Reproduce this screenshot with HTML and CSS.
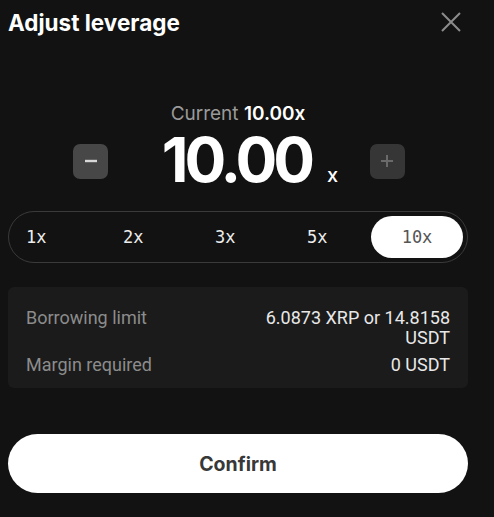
FILE: index.html
```html
<!DOCTYPE html>
<html lang="en">
<head>
    <meta charset="UTF-8">
    <meta name="viewport" content="width=device-width, initial-scale=1.0">
    <title>Adjust leverage</title>
    <link rel="stylesheet" href="styles.css">
</head>
<body>
    <div class="modal">
        <header class="modal-head">
            <h1>Adjust leverage</h1>
            <button class="close" aria-label="Close">
                <svg width="20" height="20" viewBox="0 0 20 20">
                    <path d="M1 1 L19 19 M19 1 L1 19" stroke="#8c8c8c" stroke-width="2" fill="none"/>
                </svg>
            </button>
        </header>

        <div class="current">Current <b>10.00x</b></div>

        <div class="stepper">
            <button class="step step-minus" aria-label="Decrease">
                <svg width="14" height="14" viewBox="0 0 14 14"><path d="M1 7 H13" stroke="#d8d8d8" stroke-width="2.4"/></svg>
            </button>
            <div class="value">10.00<span>x</span></div>
            <button class="step step-plus" aria-label="Increase">
                <svg width="14" height="14" viewBox="0 0 14 14"><path d="M1 7 H13 M7 1 V13" stroke="#6a6a6a" stroke-width="2"/></svg>
            </button>
        </div>

        <div class="presets">
            <button>1x</button>
            <button>2x</button>
            <button>3x</button>
            <button>5x</button>
            <button class="active">10x</button>
        </div>

        <div class="info">
            <div class="info-row">
                <span class="label">Borrowing limit</span>
                <span class="val">6.0873 XRP or 14.8158<br>USDT</span>
            </div>
            <div class="info-row">
                <span class="label">Margin required</span>
                <span class="val">0 USDT</span>
            </div>
        </div>

        <button class="confirm">Confirm</button>
    </div>
</body>
</html>
```

FILE: styles.css
```css
body {
    margin: 0;
    background-color: #121212;
    color: #fff;
    font-family: 'Inter', 'Liberation Sans', sans-serif;
}

button {
    font-family: inherit;
    cursor: pointer;
}

.modal {
    width: 460px;
    padding: 0 8px;
}

.modal-head {
    display: flex;
    justify-content: space-between;
    align-items: center;
    height: 44px;
}

.modal-head h1 {
    margin: 0;
    font-size: 22.5px;
    font-weight: 700;
}

.close {
    background: none;
    border: 0;
    padding: 0;
    margin-right: 7px;
    display: flex;
}

.current {
    text-align: center;
    margin-top: 58px;
    font-size: 19px;
    color: #9a9a9a;
    line-height: 24px;
}

.current b {
    color: #fff;
    font-weight: 600;
}

.stepper {
    display: flex;
    align-items: center;
    justify-content: space-between;
    padding: 0 63px 0 65px;
    margin-top: 7px;
    height: 56px;
}

.step {
    width: 35px;
    height: 35px;
    border: 0;
    border-radius: 7px;
    display: flex;
    align-items: center;
    justify-content: center;
    padding: 0;
}

.step-minus {
    background-color: #474747;
}

.step-plus {
    background-color: #363636;
}

.value {
    font-size: 62px;
    font-weight: 700;
    letter-spacing: -4px;
    line-height: 50px;
    margin: 12px 0 0 22px;
}

.value span {
    font-size: 20px;
    font-weight: 500;
    letter-spacing: 0;
    margin-left: 16px;
}

.presets {
    display: grid;
    grid-template-columns: 97px 92px 92px 77px 92px;
    margin-top: 22px;
    border: 1px solid #3a3a3a;
    border-radius: 27px;
    padding: 4px;
}

.presets button {
    height: 42px;
    background: none;
    border: 0;
    border-radius: 21px;
    color: #ececec;
    font-size: 17px;
    font-family: 'DejaVu Sans Mono', monospace;
    text-align: left;
    padding: 0 0 0 13px;
}

.presets button.active {
    background-color: #fff;
    color: #555;
    text-align: center;
    padding-left: 0;
}

.info {
    margin-top: 24px;
    background-color: #1b1b1b;
    border-radius: 6px;
    padding: 21px 18px 6px 18px;
    font-family: 'Roboto', 'Liberation Sans', sans-serif;
    font-size: 18px;
}

.info-row {
    display: flex;
    justify-content: space-between;
    align-items: flex-start;
    line-height: 20px;
    margin-bottom: 7px;
}

.label {
    color: #8c8c8c;
}

.val {
    color: #e8e8e8;
    text-align: right;
}

.confirm {
    display: block;
    width: 100%;
    height: 59px;
    margin-top: 46px;
    border: 0;
    border-radius: 30px;
    background-color: #fff;
    color: #383838;
    font-size: 19.5px;
    font-weight: 700;
}
```
